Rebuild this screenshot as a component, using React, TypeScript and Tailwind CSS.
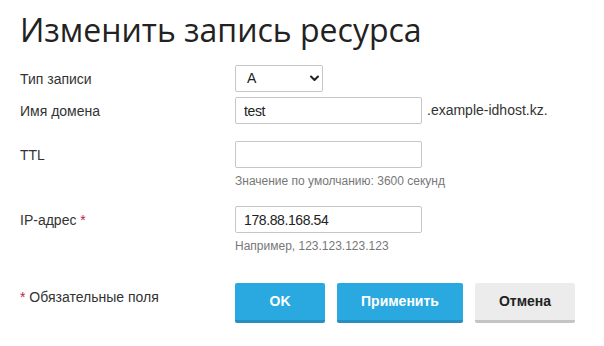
import React from "react";

type RowProps = {
  label: React.ReactNode;
  children: React.ReactNode;
  className?: string;
};

function Row({ label, children, className = "" }: RowProps) {
  return (
    <div className={`grid grid-cols-[215px_1fr] items-start ${className}`}>
      <div className="pt-[6px] text-[14px] leading-[16px] text-[#333]">{label}</div>
      <div>{children}</div>
    </div>
  );
}

function Hint({ children }: { children: React.ReactNode }) {
  return <div className="mt-[5px] text-[12px] leading-[16px] text-[#777]">{children}</div>;
}

const inputCls =
  "block h-[27px] w-[187px] rounded-[2px] border border-[#c6c6c6] bg-white px-[8px] text-[14px] tracking-[-0.4px] text-[#222] outline-none";

export default function App() {
  return (
    <div className="min-h-[346px] w-[604px] bg-white pl-[20px] font-['Liberation_Sans',Arial,sans-serif]">
      <h1 className="pt-[12px] font-['Open_Sans',sans-serif] text-[32px] leading-[35px] font-normal text-[#222]">
        Изменить запись ресурса
      </h1>

      <div className="mt-[18px]">
        <Row label="Тип записи">
          <div className="relative w-[88px]">
            <select
              defaultValue="A"
              className="block h-[27px] w-[88px] appearance-none rounded-[2px] border border-[#c6c6c6] bg-white pl-[11px] text-[14px] text-[#222] outline-none">
              <option value="A">A</option>
              <option value="AAAA">AAAA</option>
              <option value="CNAME">CNAME</option>
              <option value="MX">MX</option>
              <option value="TXT">TXT</option>
            </select>
            <svg
              className="pointer-events-none absolute right-[4px] top-[10px] h-[7px] w-[9px]"
              viewBox="0 0 9 7"
              fill="none">
              <path d="M1 1.5 4.5 5 8 1.5" stroke="#222" strokeWidth="2" strokeLinecap="round" strokeLinejoin="round" />
            </svg>
          </div>
        </Row>

        <Row label="Имя домена" className="mt-[5px]">
          <div className="flex items-center gap-[5px]">
            <input className={inputCls} defaultValue="test" />
            <span className="text-[14px] text-[#333]">.example-idhost.kz.</span>
          </div>
        </Row>

        <Row label="TTL" className="mt-[17px]">
          <input className={inputCls} defaultValue="" />
          <Hint>Значение по умолчанию: 3600 секунд</Hint>
        </Row>

        <Row
          label={
            <>
              IP-адрес <span className="text-[#c4184a]">*</span>
            </>
          }
          className="mt-[17px]">
          <input className={inputCls} defaultValue="178.88.168.54" />
          <Hint>Например, 123.123.123.123</Hint>
        </Row>

        <Row
          label={
            <>
              <span className="text-[#c4184a]">*</span> Обязательные поля
            </>
          }
          className="mt-[29px]">
          <div className="flex gap-[12px]">
            <button
              type="button"
              className="h-[40px] w-[90px] rounded-[2px] border-b-[3px] border-[#2490c0] bg-[#29a9df] text-[14px] font-bold text-white">
              OK
            </button>
            <button
              type="button"
              className="h-[40px] w-[126px] rounded-[2px] border-b-[3px] border-[#2490c0] bg-[#29a9df] text-[14px] font-bold text-white">
              Применить
            </button>
            <button
              type="button"
              className="h-[40px] w-[100px] rounded-[2px] border-b-[3px] border-[#c4c4c4] bg-[#ececec] text-[14px] font-bold text-[#222]">
              Отмена
            </button>
          </div>
        </Row>
      </div>
    </div>
  );
}
